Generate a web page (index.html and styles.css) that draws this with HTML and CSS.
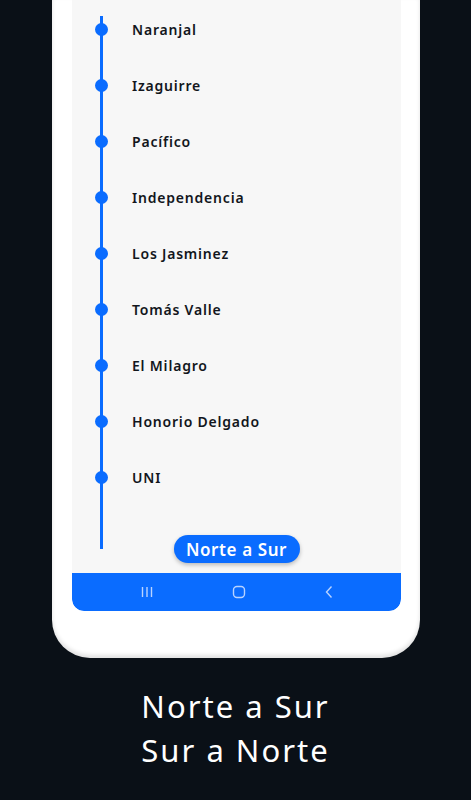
FILE: index.html
```html
<!DOCTYPE html>
<html lang="es">
<head>
  <meta charset="UTF-8" />
  <meta name="viewport" content="width=device-width, initial-scale=1.0"/>
  <title>Norte a Sur</title>
  <link rel="stylesheet" href="styles.css">
</head>
<body>
  <div class="phone">
    <div class="screen">
      <div class="main">
        <ul class="stations">
          <li><span class="dot"></span>Naranjal</li>
          <li><span class="dot"></span>Izaguirre</li>
          <li><span class="dot"></span>Pacífico</li>
          <li><span class="dot"></span>Independencia</li>
          <li><span class="dot"></span>Los Jasminez</li>
          <li><span class="dot"></span>Tomás Valle</li>
          <li><span class="dot"></span>El Milagro</li>
          <li><span class="dot"></span>Honorio Delgado</li>
          <li><span class="dot"></span>UNI</li>
        </ul>
        <button class="direction">Norte a Sur</button>
      </div>
      <nav class="navbar">
        <svg width="12" height="12" viewBox="0 0 12 12"><path d="M1.5 1v10M6 1v10M10.5 1v10" stroke="#b9d3ff" stroke-width="1.4" fill="none"/></svg>
        <svg width="14" height="14" viewBox="0 0 14 14"><rect x="1.5" y="1.5" width="11" height="11" rx="3.5" stroke="#b9d3ff" stroke-width="1.4" fill="none"/></svg>
        <svg width="8" height="14" viewBox="0 0 8 14"><path d="M6.5 1.5 1.5 7l5 5.5" stroke="#b9d3ff" stroke-width="1.4" fill="none"/></svg>
      </nav>
    </div>
  </div>

  <p class="caption">Norte a Sur<br>Sur a Norte</p>
</body>
</html>
```

FILE: styles.css
```css
body { margin: 0; background: #0a1017; width: 471px; height: 800px; overflow: hidden; font-family: "Noto Sans", sans-serif; }

.phone { margin-left: 52px; width: 368px; height: 658px; box-sizing: border-box; padding: 0 19px 47px 20px; background: #fff; border-radius: 0 0 38px 38px; box-shadow: inset 0 -3px 4px rgba(0, 0, 0, 0.12); }
.screen { height: 611px; background: #f7f7f7; border-radius: 0 0 12px 12px; display: flex; flex-direction: column; overflow: hidden; }

.main { position: relative; height: 573px; display: flex; flex-direction: column; }
.main::before { content: ""; position: absolute; left: 28px; top: 16px; height: 533px; width: 3px; background: #0a6cff; }

.stations { list-style: none; margin: 0; padding: 1px 0 0; }
.stations li { height: 56px; display: flex; align-items: center; font-size: 14px; font-weight: 600; color: #12161c; letter-spacing: 0.8px; }
.dot { width: 13px; height: 13px; border-radius: 50%; background: #0a6cff; margin: 0 24px 0 23px; position: relative; }

.direction { margin: auto auto 10px; width: 126px; height: 28px; border: 0; border-radius: 14px; background: #0a6cff; color: #fff; font-family: inherit; font-size: 17px; font-weight: 600; letter-spacing: 0.6px; box-shadow: 0 2px 4px rgba(0, 0, 0, 0.25); position: relative; }

.navbar { height: 38px; background: #0a6cff; display: flex; align-items: center; justify-content: center; gap: 79px; border-radius: 0 0 12px 12px; }

.caption { margin: 26px 0 0; text-align: center; color: #fff; font-size: 31px; line-height: 44px; letter-spacing: 2px; }
```
